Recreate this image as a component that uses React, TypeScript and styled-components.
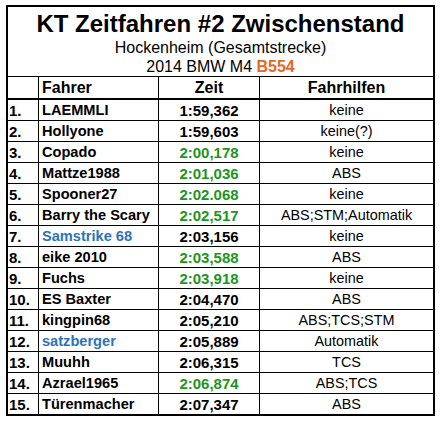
import React from 'react';
import styled, { createGlobalStyle } from 'styled-components';

const GlobalStyle = createGlobalStyle`
  body {
    margin: 0;
    padding: 5px 6px;
    background: #fff;
    font-family: "Liberation Sans", Arial, sans-serif;
    color: #000;
  }
`;

const Frame = styled.div`
  box-sizing: border-box;
  width: 429px;
  border: 2px solid #000;
  background: #fff;
`;

const TitleBlock = styled.div`
  height: 69px;
  padding-top: 3px;
  box-sizing: border-box;
  text-align: center;
`;

const Title = styled.div`
  font-size: 24px;
  font-weight: bold;
  line-height: 28px;
`;

const SubLine = styled.div`
  font-size: 16px;
  line-height: 19px;
`;

const CarCode = styled.span`
  color: #e8681e;
  font-weight: bold;
`;

const Grid = styled.div`
  display: grid;
  grid-template-columns: 31px 120px 101px 173px;
  border-top: 1px solid #000;
`;

type Align = 'left' | 'center';

const Cell = styled.div<{ $align?: Align; $head?: boolean; $last?: boolean; $edge?: boolean }>`
  box-sizing: border-box;
  height: ${(p) => (p.$head ? '23px' : p.$last ? '20px' : '21px')};
  display: flex;
  align-items: center;
  justify-content: ${(p) => (p.$align === 'center' ? 'center' : 'flex-start')};
  padding: ${(p) => (p.$align === 'center' ? '0' : '0 0 0 3px')};
  border-right: ${(p) => (p.$edge ? 'none' : '1px solid #000')};
  border-bottom: ${(p) => (p.$last ? 'none' : p.$head ? '2px solid #000' : '1px solid #000')};
  white-space: nowrap;
  overflow: hidden;
`;

const HeadText = styled.span`
  font-size: 16px;
  font-weight: bold;
`;

const Rank = styled.span`
  font-size: 15px;
  font-weight: bold;
  margin-left: -2px;
`;

const Name = styled.span<{ $blue?: boolean }>`
  font-size: 14.6px;
  font-weight: bold;
  color: ${(p) => (p.$blue ? '#2a74bc' : '#000')};
`;

const Time = styled.span<{ $green?: boolean }>`
  font-size: 15px;
  font-weight: bold;
  color: ${(p) => (p.$green ? '#1c961c' : '#000')};
`;

const Aids = styled.span`
  font-size: 14.4px;
`;

interface Entry {
  name: string;
  time: string;
  aids: string;
  green?: boolean;
  blue?: boolean;
}

const entries: Entry[] = [
  { name: 'LAEMMLI', time: '1:59,362', aids: 'keine' },
  { name: 'Hollyone', time: '1:59,603', aids: 'keine(?)' },
  { name: 'Copado', time: '2:00,178', aids: 'keine', green: true },
  { name: 'Mattze1988', time: '2:01,036', aids: 'ABS', green: true },
  { name: 'Spooner27', time: '2:02.068', aids: 'keine', green: true },
  { name: 'Barry the Scary', time: '2:02,517', aids: 'ABS;STM;Automatik', green: true },
  { name: 'Samstrike 68', time: '2:03,156', aids: 'keine', blue: true },
  { name: 'eike 2010', time: '2:03,588', aids: 'ABS', green: true },
  { name: 'Fuchs', time: '2:03,918', aids: 'keine', green: true },
  { name: 'ES Baxter', time: '2:04,470', aids: 'ABS' },
  { name: 'kingpin68', time: '2:05,210', aids: 'ABS;TCS;STM' },
  { name: 'satzberger', time: '2:05,889', aids: 'Automatik', blue: true },
  { name: 'Muuhh', time: '2:06,315', aids: 'TCS' },
  { name: 'Azrael1965', time: '2:06,874', aids: 'ABS;TCS', green: true },
  { name: 'Türenmacher', time: '2:07,347', aids: 'ABS' }
];

const App: React.FC = () => {
  return (
    <>
      <GlobalStyle />
      <Frame>
        <TitleBlock>
          <Title>KT Zeitfahren #2 Zwischenstand</Title>
          <SubLine>Hockenheim (Gesamtstrecke)</SubLine>
          <SubLine>
            2014 BMW M4 <CarCode>B554</CarCode>
          </SubLine>
        </TitleBlock>
        <Grid>
          <Cell $head />
          <Cell $head>
            <HeadText>Fahrer</HeadText>
          </Cell>
          <Cell $head $align="center">
            <HeadText>Zeit</HeadText>
          </Cell>
          <Cell $head $align="center" $edge>
            <HeadText>Fahrhilfen</HeadText>
          </Cell>
          {entries.map((e, i) => {
            const last = i === entries.length - 1;
            return (
              <React.Fragment key={e.name}>
                <Cell $last={last}>
                  <Rank>{i + 1}.</Rank>
                </Cell>
                <Cell $last={last}>
                  <Name $blue={e.blue}>{e.name}</Name>
                </Cell>
                <Cell $last={last} $align="center">
                  <Time $green={e.green}>{e.time}</Time>
                </Cell>
                <Cell $last={last} $align="center" $edge>
                  <Aids>{e.aids}</Aids>
                </Cell>
              </React.Fragment>
            );
          })}
        </Grid>
      </Frame>
    </>
  );
};

export default App;
